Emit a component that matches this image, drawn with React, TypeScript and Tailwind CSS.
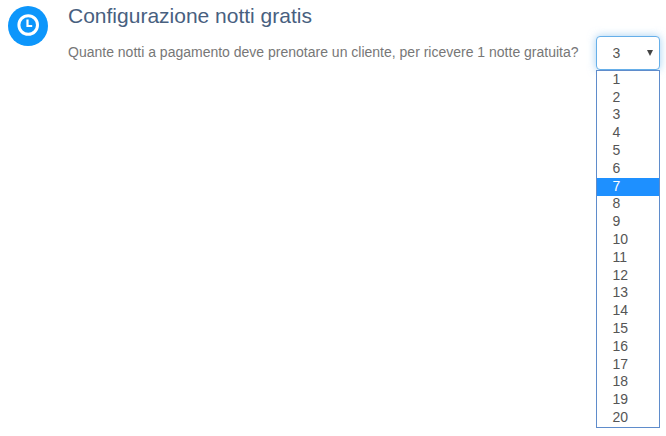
import React, { useState } from 'react';

const nights = Array.from({ length: 20 }, (_, i) => i + 1);

const ClockBadge: React.FC = () => (
  <div className="flex size-10 shrink-0 items-center justify-center rounded-full bg-[#0d96fb]">
    <svg viewBox="0 0 24 24" className="size-6" fill="none" stroke="white" aria-hidden="true">
      <circle cx="12.2" cy="11" r="9.3" strokeWidth="3" />
      <path d="M11.5 5.5V12h4.7" strokeWidth="2.2" />
    </svg>
  </div>
);

interface NightsSelectProps {
  id: string;
}

const NightsSelect: React.FC<NightsSelectProps> = ({ id }) => {
  const [value, setValue] = useState(3);
  const [active, setActive] = useState(7);
  const [open, setOpen] = useState(true);

  const choose = (n: number) => {
    setValue(n);
    setOpen(false);
  };

  return (
    <div className="relative w-16 shrink-0">
      <select
        id={id}
        value={value}
        onChange={e => setValue(Number(e.target.value))}
        onMouseDown={e => {
          e.preventDefault();
          setOpen(!open);
        }}
        className="block h-[34px] w-full appearance-none rounded border border-[#66afe9] bg-white pl-4 text-sm text-[#555] shadow-[0_0_8px_rgba(102,175,233,0.6)] outline-none"
      >
        {nights.map(n => (
          <option key={n} value={n}>{n}</option>
        ))}
      </select>
      <svg viewBox="0 0 6 6" className="pointer-events-none absolute top-3.5 right-[7px] size-1.5" aria-hidden="true">
        <path d="M0 0h6L3 6z" fill="#444" />
      </svg>
      {open && (
        <ul
          role="listbox"
          aria-label="Notti a pagamento"
          className="absolute top-full left-0 grid h-[358px] w-full auto-rows-fr border border-[#5f8ccb] bg-white text-sm text-[#555]"
        >
          {nights.map(n => (
            <li
              key={n}
              role="option"
              aria-selected={n === active}
              onMouseEnter={() => setActive(n)}
              onClick={() => choose(n)}
              className={`flex cursor-default items-center pb-0.5 pl-4 leading-[14px] ${n === active ? 'bg-[#1e90ff] text-white' : ''}`}
            >
              {n}
            </li>
          ))}
        </ul>
      )}
    </div>
  );
};

const App: React.FC = () => (
  <section className="flex min-h-screen items-start gap-5 bg-white px-2 pt-1.5 font-['Liberation_Sans',Arial,sans-serif]">
    <ClockBadge />
    <div className="min-w-0 flex-1">
      <h2 className="text-[21px] leading-5 text-[#48607f]">Configurazione notti gratis</h2>
      <div className="mt-2.5 flex items-center gap-[17px]">
        <label htmlFor="paid-nights" className="pb-0.5 text-sm whitespace-nowrap text-[#777]">
          Quante notti a pagamento deve prenotare un cliente, per ricevere 1 notte gratuita?
        </label>
        <NightsSelect id="paid-nights" />
      </div>
    </div>
  </section>
);

export default App;
